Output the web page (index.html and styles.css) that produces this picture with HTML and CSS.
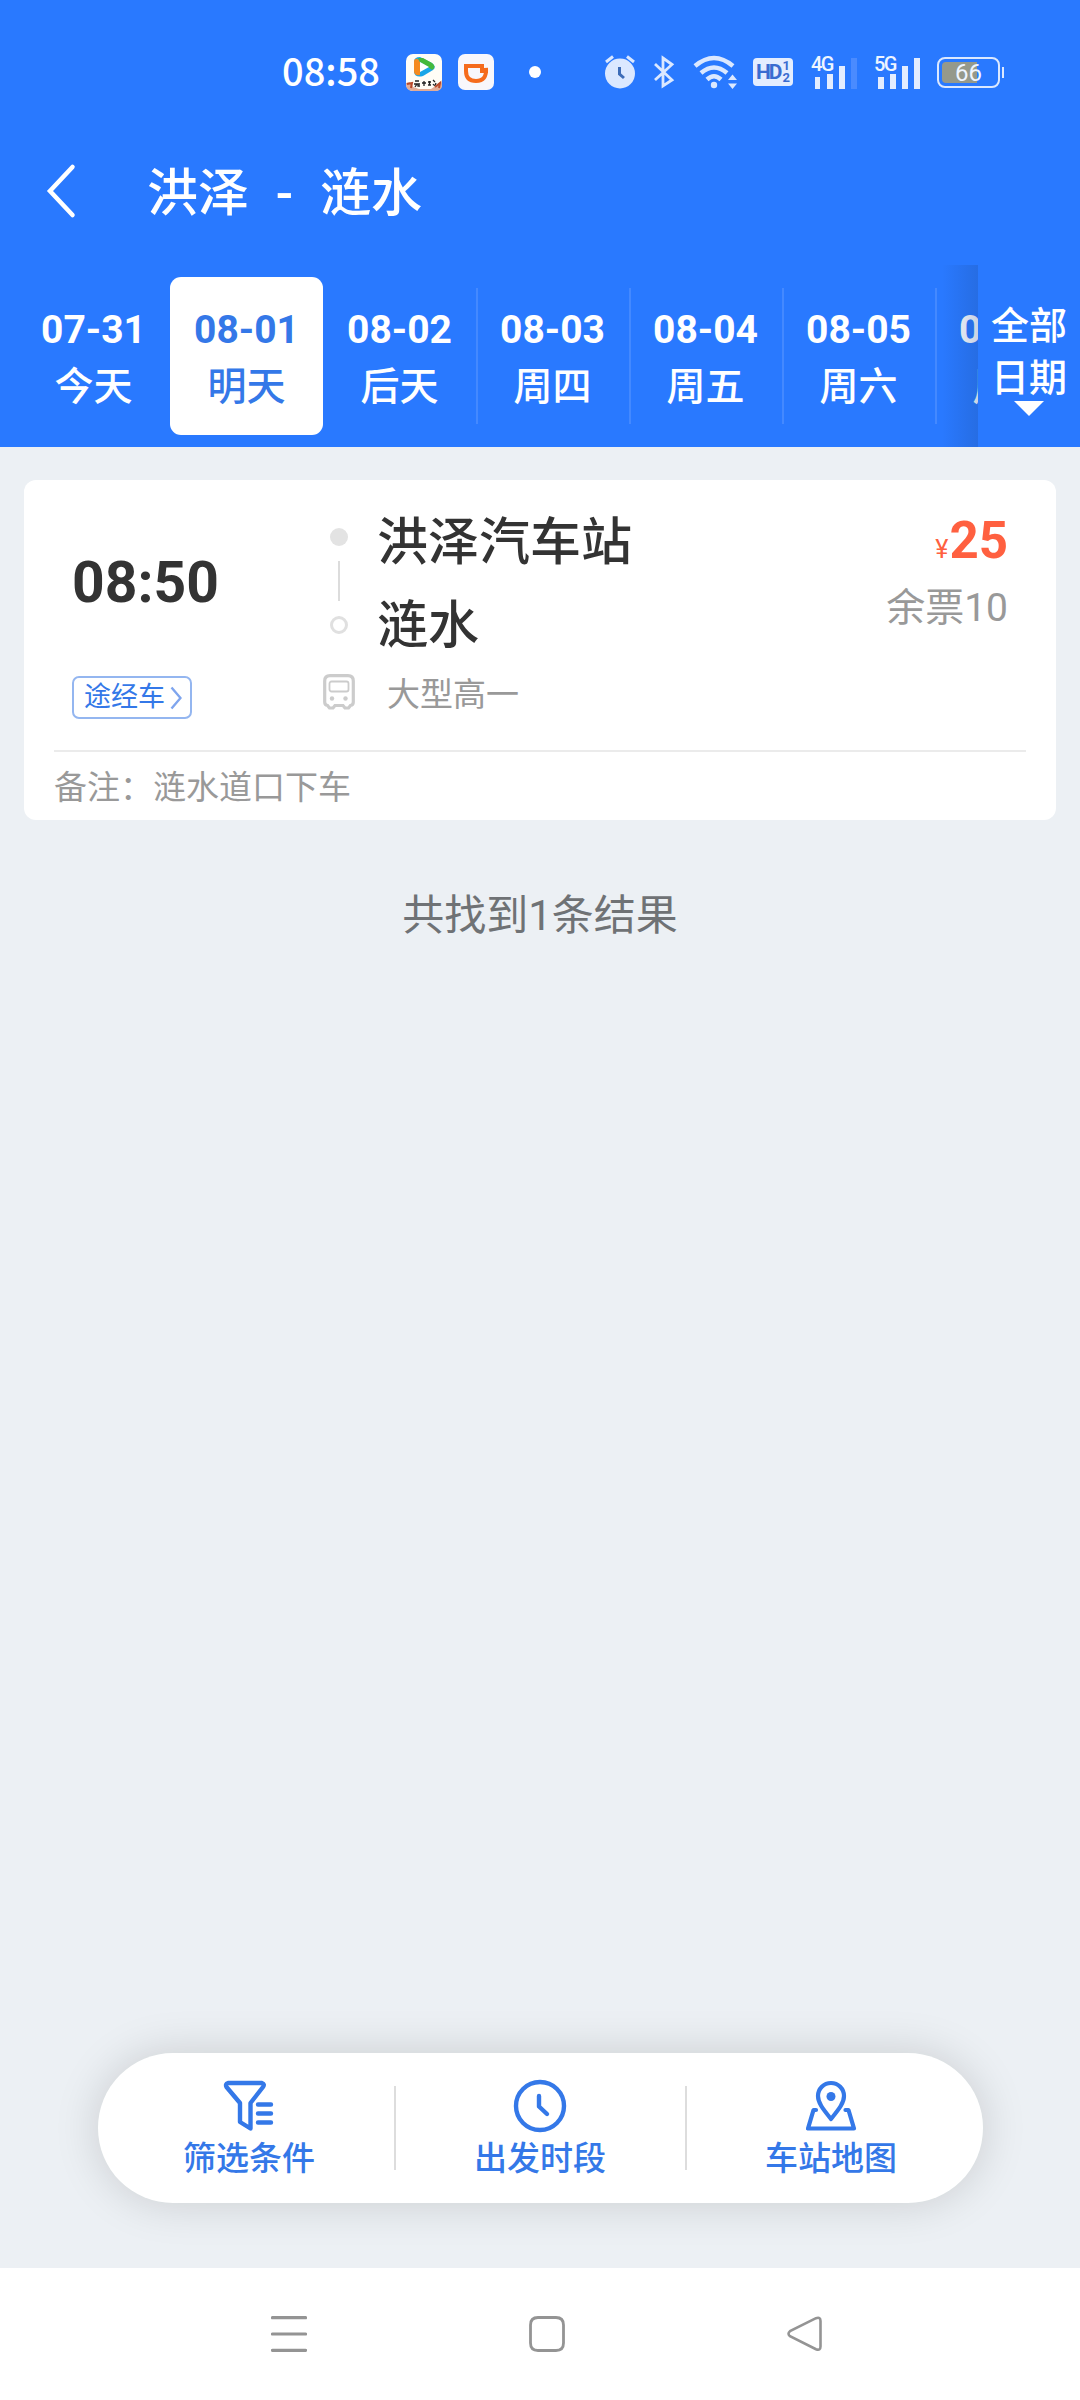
FILE: index.html
```html
<!DOCTYPE html>
<html lang="zh-CN">
<head>
<meta charset="utf-8">
<title>洪泽 - 涟水</title>
<link rel="stylesheet" href="styles.css">
</head>
<body>
<div class="screen">
  <header class="header">
    <div class="status">
      <span class="clock">08:58</span>
      <svg class="app-video" width="36" height="37" viewBox="0 0 36 37">
        <rect width="36" height="37" rx="7" fill="#fffdf6"/>
        <path d="M8 8Q8 3 14 3L26 9Q31 13 27 16L17 22Q9 24 8 18Z" fill="#19a6e8"/>
        <path d="M8 8Q8 4 12 5L14 8V21Q8 22 8 17Z" fill="#f58a1f"/>
        <path d="M12 4 17 4 26 9Q31 13 26 16L22 13 14 8Z" fill="#44b93c"/>
        <path d="M14 8 23 13 14 18Z" fill="#fff"/>
        <path d="M0 29 4 28 7 33 13 35H25L31 31 36 28V31Q36 37 29 37H7Q0 37 0 30Z" fill="#e2ab95"/>
        <path d="M1 30 6 29 5 34M29 33 34 29 33 34" fill="none" stroke="#b94a2b" stroke-width="2"/>
        <path d="M9 27H13M8 30H14M11 30 9 33M12 30V32H14M16 29H20M18 27V32M22 28H25M23.500 27V31M22 31H25M27 26 29 28M27 30Q29 33 30 29" fill="none" stroke="#222" stroke-width="1.300"/>
      </svg>
      <svg class="app-ride" width="36" height="36" viewBox="0 0 36 36">
        <rect width="36" height="36" rx="7" fill="#f8f7fb"/>
        <path d="M8 12H24V17H28V14Q29 27 18 27 8 27 8 17Z" fill="none" stroke="#f56b1c" stroke-width="4"/>
      </svg>
      <span class="more-dot"></span>
      <svg class="alarm" width="32" height="36" viewBox="0 0 32 36">
        <circle cx="16" cy="19.500" r="15" fill="#dbe8ff"/>
        <path d="M2 8 9 2.500M30 8 23 2.500" stroke="#dbe8ff" stroke-width="3"/>
        <path d="M15.500 13V20L20 24" fill="none" stroke="#3d6cb8" stroke-width="3"/>
      </svg>
      <svg class="bluetooth" width="22" height="34" viewBox="0 0 22 34">
        <path d="M2 9 19 25 10 31V3L19 9.500 2 25" fill="none" stroke="#dbe8ff" stroke-width="2.800"/>
      </svg>
      <svg class="wifi" width="45" height="36" viewBox="0 0 45 36">
        <g fill="none" stroke="#dbe8ff" stroke-width="4.500"><path d="M2 12Q21-4 40 12"/><path d="M8 19Q21 8 34 19"/><path d="M14 25.500Q21 19 28 25.500"/></g>
        <circle cx="21" cy="31" r="3.200" fill="#dbe8ff"/>
        <path d="M35 26 39.500 20.500 44 26ZM35 29.500 39.500 35 44 29.500Z" fill="#dbe8ff"/>
      </svg>
      <span class="hd"><span class="hd-name">HD</span><span class="sims"><span>1</span><span>2</span></span></span>
      <span class="signal"><span class="net">4G</span><svg width="42" height="31" viewBox="0 0 42 31"><path d="M0 19H5V31H0ZM12 16H18V31H12ZM24 8H30V31H24Z" fill="#e3edff"/><path d="M36 0H42V31H36Z" fill="#4a8bff"/></svg></span>
      <span class="signal second"><span class="net">5G</span><svg width="42" height="31" viewBox="0 0 42 31"><path d="M0 19H6V31H0ZM12 16H18V31H12ZM24 8H30V31H24ZM36 0H42V31H36Z" fill="#e3edff"/></svg></span>
      <span class="battery"><span class="level">66</span></span>
      <span class="battery-tip"></span>
    </div>
    <div class="titlebar">
      <svg class="back" width="30" height="56" viewBox="0 0 30 56"><path d="M26.500 4 4 28 26.500 52" fill="none" stroke="#fff" stroke-width="4.500" stroke-linecap="round"/></svg>
      <h1 class="title"><span>洪泽</span><span class="dash">-</span><span>涟水</span></h1>
    </div>
    <nav class="dates">
      <div class="strip">
        <div class="day"><b>07-31</b><span>今天</span></div>
        <div class="day active"><b>08-01</b><span>明天</span></div>
        <div class="day"><b>08-02</b><span>后天</span></div>
        <div class="day lined"><b>08-03</b><span>周四</span></div>
        <div class="day lined"><b>08-04</b><span>周五</span></div>
        <div class="day lined"><b>08-05</b><span>周六</span></div>
        <div class="day lined"><b>08-06</b><span>周日</span></div>
      </div>
      <div class="all"><span>全部</span><span>日期</span><i class="caret"></i></div>
    </nav>
  </header>

  <main class="main">
    <article class="card">
      <div class="trip">
        <div class="left">
          <div class="time">08:50</div>
          <div class="tag"><span>途经车</span><svg width="12" height="24" viewBox="0 0 12 24"><path d="M1.500 1.500 10.500 12 1.500 22.500" fill="none" stroke="#7fa5ee" stroke-width="2.400"/></svg></div>
        </div>
        <div class="rail">
          <i class="dot"></i><i class="line"></i><i class="ring"></i>
          <svg class="bus" width="32" height="36" viewBox="0 0 32 36">
            <g fill="none" stroke="#ccc"><path d="M7 1.700H25Q30.300 1.700 30.300 7V28Q30.300 31 27.500 31.500L25.500 34H22L20 31.500H12L10 34H6.500L4.500 31.500Q1.700 31 1.700 28V7Q1.700 1.700 7 1.700Z" stroke-width="3.200"/><rect x="6.500" y="7.500" width="19" height="10" rx="2" stroke-width="1.800"/></g>
            <circle cx="9" cy="24.500" r="2.200" fill="#ccc"/><circle cx="22.500" cy="24.500" r="2.200" fill="#ccc"/>
          </svg>
        </div>
        <div class="stops">
          <div class="stop">洪泽汽车站</div>
          <div class="stop">涟水</div>
          <div class="vehicle">大型高一</div>
        </div>
        <div class="fare">
          <div class="price"><small>¥</small>25</div>
          <div class="seats">余票10</div>
        </div>
      </div>
      <div class="note">备注：涟水道口下车</div>
    </article>
    <p class="count">共找到1条结果</p>
    <div class="toolbar">
      <div class="tool">
        <svg width="52" height="54" viewBox="0 0 52 54"><g fill="none" stroke="#3478e8" stroke-width="4.400" stroke-linejoin="round" stroke-linecap="round"><path d="M5 4H39Q42 5 40 8L27.500 24V49.500L17 43V24L3.500 8Q2 5 5 4Z"/><path d="M35 25.500H48M35 34.500H48M35 43.500H48"/></g></svg>
        <span>筛选条件</span>
      </div>
      <div class="tool">
        <svg width="54" height="54" viewBox="0 0 54 54"><g fill="none" stroke="#3478e8" stroke-width="4.400" stroke-linejoin="round" stroke-linecap="round"><circle cx="27" cy="27" r="24"/><path d="M26 17V27.500L34 35"/></g></svg>
        <span>出发时段</span>
      </div>
      <div class="tool">
        <svg width="52" height="54" viewBox="0 0 52 54"><g fill="none" stroke="#3478e8" stroke-width="4.200" stroke-linejoin="round" stroke-linecap="round"><path d="M26 40C18 30 13 24 13 17A13 13 0 0 1 39 17C39 24 34 30 26 40Z"/><path d="M11 31H8.500L3 49.500H49L43.500 31H40.500"/></g><circle cx="26" cy="17.500" r="4.500" fill="#3478e8"/></svg>
        <span>车站地图</span>
      </div>
    </div>
  </main>

  <footer class="navbar">
    <svg width="36" height="36" viewBox="0 0 36 36"><path d="M1.500 1.700H34.500M1.500 18H34.500M1.500 34.300H34.500" stroke="#949494" stroke-width="3.200" stroke-linecap="round"/></svg>
    <svg width="36" height="36" viewBox="0 0 36 36"><path d="M9 1.500H27Q34.500 1.500 34.500 9V27Q34.500 34.500 27 34.500H9Q1.500 34.500 1.500 27V9Q1.500 1.500 9 1.500Z" fill="none" stroke="#949494" stroke-width="2.800"/></svg>
    <svg width="36" height="36" viewBox="0 0 36 36"><path d="M29 2.200Q33.500 .500 33.500 5V30.500Q33.500 35 29 33.200L3 20.200Q0 17.700 3 15.200Z" fill="none" stroke="#949494" stroke-width="2.600"/></svg>
  </footer>
</div>
</body>
</html>
```

FILE: styles.css
```css
* { box-sizing: border-box; }
body { margin: 0; }
svg { display: block; flex: none; }

.screen {
  width: 1080px;
  height: 2400px;
  display: flex;
  flex-direction: column;
  overflow: hidden;
  background: #ecf0f4;
  font-family: Roboto, "Noto Sans CJK SC", sans-serif;
  color: #333;
}

/* header */
.header {
  height: 447px;
  background: #2979ff;
  color: #fff;
  display: flex;
  flex-direction: column;
}
.status {
  height: 144px;
  padding-left: 282px;
  display: flex;
  align-items: center;
  color: #eef5ff;
}
.clock {
  width: 124px;
  padding-bottom: 4px;
  font: 500 38px/40px "Noto Sans CJK SC", sans-serif;
  color: #fff;
}
.app-ride { margin-left: 16px; }
.more-dot { width: 12px; height: 12px; margin-left: 35px; border-radius: 50%; background: #fff; }
.alarm { margin-left: 63px; }
.bluetooth { margin-left: 17px; }
.wifi { margin-left: 18px; }
.hd {
  width: 40px;
  height: 28px;
  margin-left: 15px;
  display: flex;
  align-items: center;
  justify-content: center;
  gap: 2px;
  border-radius: 4px;
  background: #e3edff;
  color: #3a6cd0;
  font-size: 21px;
  font-weight: 700;
}
.hd-name { letter-spacing: -2px; }
.sims { display: flex; flex-direction: column; font-size: 13px; line-height: 12px; }
.signal {
  width: 48px;
  height: 33px;
  margin-left: 18px;
  padding: 2px 0 0 4px;
  position: relative;
}
.second { margin-left: 15px; }
.net {
  position: absolute;
  left: 0;
  top: -2px;
  font-size: 20px;
  line-height: 20px;
  font-weight: 500;
  letter-spacing: -1.5px;
}
.battery {
  width: 63px;
  height: 31px;
  margin-left: 15px;
  padding: 3px;
  border: 2px solid #dbe8ff;
  border-radius: 8px;
}
.level {
  display: block;
  height: 21px;
  border-radius: 4px;
  background: linear-gradient(90deg, #95998b 66%, #2979ff 66%);
  font-size: 24px;
  line-height: 22px;
  text-align: center;
}
.battery-tip { width: 2px; height: 11px; margin-left: 2px; background: #dbe8ff; }

.titlebar {
  height: 121px;
  padding: 0 46px 25px;
  display: flex;
  align-items: center;
}
.back { margin-top: -3px; }
.title {
  margin: 3px 0 0 71px;
  display: flex;
  font-size: 51px;
  line-height: 60px;
  font-weight: 500;
}
.dash { width: 71px; text-align: center; }

.dates { height: 182px; display: flex; }
.strip {
  width: 978px;
  padding: 12px 0 0 17px;
  display: flex;
  overflow: hidden;
  position: relative;
}
.strip::after {
  content: "";
  position: absolute;
  right: 0;
  top: 0;
  width: 36px;
  height: 182px;
  background: linear-gradient(90deg, rgba(30, 70, 140, 0), rgba(30, 70, 140, .24));
}
.day {
  width: 153px;
  height: 158px;
  flex: none;
  padding-top: 24px;
  display: flex;
  flex-direction: column;
  align-items: center;
  border-radius: 11px;
  font-size: 39px;
  font-weight: 500;
}
.day b { line-height: 58px; font-weight: 700; }
.day span { line-height: 56px; }
.active { background: #fff; color: #3478e8; }
.lined { background: linear-gradient(#4489ff, #4489ff) 0 11px / 2px 136px no-repeat; border-radius: 0; }
.all {
  width: 102px;
  padding-top: 35px;
  display: flex;
  flex-direction: column;
  align-items: center;
  font-size: 38px;
  line-height: 52px;
  font-weight: 500;
}
.caret { margin-top: -3px; border: 15px solid transparent; border-top-color: #fff; border-bottom: 0; }

/* results */
.main { flex: 1; padding: 33px 24px 0; display: flex; flex-direction: column; align-items: center; }
.card {
  width: 1032px;
  height: 340px;
  padding: 0 30px;
  border-radius: 12px;
  background: #fff;
}
.trip { height: 272px; padding: 0 18px; display: flex; border-bottom: 2px solid #ebebeb; }
.left { width: 251px; padding-top: 67px; }
.time { font-size: 57px; line-height: 72px; font-weight: 700; }
.tag {
  width: 120px;
  height: 43px;
  margin-top: 57px;
  padding: 0 8px 0 10px;
  display: flex;
  align-items: center;
  justify-content: space-between;
  border: 2px solid #94b6f0;
  border-radius: 7px;
  font-size: 27px;
  line-height: 39px;
  color: #3478e8;
}
.rail { width: 32px; display: flex; flex-direction: column; align-items: center; }
.dot { width: 18px; height: 18px; margin-top: 48px; border-radius: 50%; background: #e3e3e3; }
.line { width: 2px; height: 40px; margin-top: 15px; background: #dcdcdc; }
.ring { width: 18px; height: 18px; margin-top: 15px; border: 3px solid #e0e0e0; border-radius: 50%; }
.bus { margin-top: 40px; }
.stops { flex: 1; padding: 21px 0 0 22px; font-size: 51px; font-weight: 500; }
.stop { height: 83px; line-height: 83px; }
.vehicle { padding-left: 10px; font-size: 33px; font-weight: 400; line-height: 55px; color: #999; }
.fare { text-align: right; }
.price { padding-top: 30px; font-size: 51px; line-height: 62px; font-weight: 700; color: #ff6040; }
.price small { margin-right: 1px; font-size: 25px; font-weight: 400; }
.seats { font-size: 39px; line-height: 55px; color: #999; }
.note { font-size: 33px; line-height: 72px; color: #999; }
.count { margin: 66px 0 0; font-size: 42px; line-height: 60px; color: #6f7275; }

.toolbar {
  width: 885px;
  height: 150px;
  margin-top: auto;
  margin-bottom: 65px;
  padding: 0 6px;
  display: grid;
  grid-template-columns: repeat(3, 1fr);
  border-radius: 75px;
  background: #fff;
  box-shadow: 0 0 45px rgba(0, 0, 0, .15);
}
.tool {
  padding-top: 26px;
  display: flex;
  flex-direction: column;
  align-items: center;
  font-size: 33px;
  line-height: 51px;
  font-weight: 500;
  color: #3478e8;
}
.tool + .tool { background: linear-gradient(#ddd, #ddd) -1px 33px / 2px 84px no-repeat; }
.tool + .tool { background-position: 0 33px; margin-left: -1px; padding-left: 1px; }

.navbar {
  height: 132px;
  padding: 48px 257px 0 271px;
  display: flex;
  justify-content: space-between;
  background: #fff;
}
```
